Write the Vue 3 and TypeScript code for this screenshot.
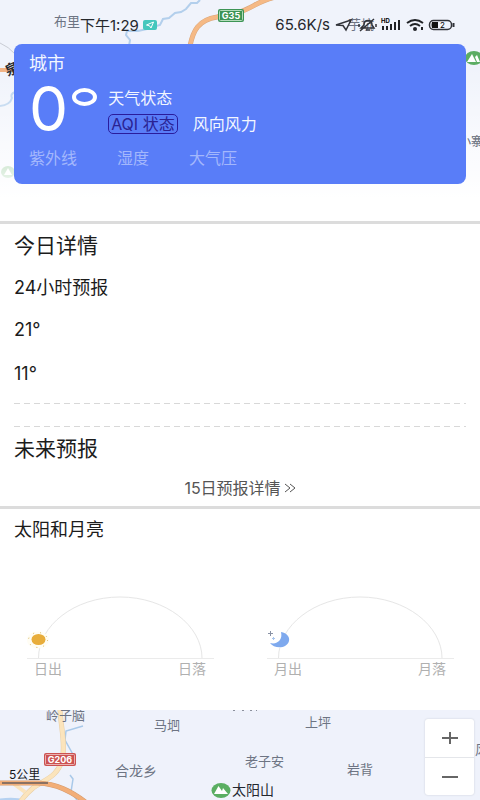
<script setup lang="ts">
import { ref } from 'vue'

interface Orbit {
  id: 'sun' | 'moon'
  rise: string
  set: string
}

const metrics: string[] = ['紫外线', '湿度', '大气压']
const temps: string[] = ['21°', '11°']
const orbits: Orbit[] = [
  { id: 'sun', rise: '日出', set: '日落' },
  { id: 'moon', rise: '月出', set: '月落' },
]

const zoomLevel = ref(12)
</script>

<template>
  <main class="page">
    <section class="hero">
      <svg class="hero-map" viewBox="0 0 480 221" preserveAspectRatio="xMidYMin slice" aria-hidden="true">
        <defs>
          <linearGradient id="fade" x1="0" y1="0" x2="0" y2="1">
            <stop offset="0.3" stop-color="#fff" stop-opacity="0" />
            <stop offset="0.9" stop-color="#fff" stop-opacity="1" />
          </linearGradient>
        </defs>
        <rect width="480" height="221" fill="#f0f3fb" />
        <path d="M200 0 L197 3 L191 3 L186 9 L181 12 L175 13 L169 18 L163 19 L160 25 L153 27 L147 29 L138 31 L127 31 L126 35 L130 40 L129 46" fill="none" stroke="#b3cfec" stroke-width="2" />
        <path d="M190 46 C193 31 198 20 217 17 L240 12 C254 7 260 0 276 -3" fill="none" stroke="#d9a67b" stroke-width="5" />
        <path d="M190 46 C193 31 198 20 217 17 L240 12 C254 7 260 0 276 -3" fill="none" stroke="#f5b985" stroke-width="4" />
        <path d="M0 70 H15" stroke="#f0b182" stroke-width="4" />
        <path d="M0 43 Q9 47 15 54" fill="none" stroke="#c9ccd4" />
        <path d="M0 106 Q10 105 12 98 Q10 94 15 92" fill="none" stroke="#b3cfec" stroke-width="2" />
        <text x="54" y="26" class="place">布里</text>
        <text x="5" y="74" class="place strong" transform="rotate(-25 12 69)">泉</text>
        <text x="348" y="29" class="place">芋坑</text>
        <text x="459" y="146" class="place near">小寨</text>
        <rect x="218" y="9" width="26" height="13" rx="2" fill="#3d9455" />
        <rect x="219.500" y="10.500" width="23" height="10" rx="1" fill="none" stroke="#b4dcbb" />
        <text x="231" y="19" class="shield">G35</text>
        <ellipse cx="474" cy="58" rx="9" ry="7" fill="#5cad63" />
        <path d="M467 62 L472 54 L476 62 Z M475 57 L477 55 L480 62 H477 Z" fill="#fff" />
        <ellipse cx="8" cy="172" rx="7" ry="6" fill="#5cad63" />
        <path d="M4 175 L8 168 L12 175 Z" fill="#fff" />
        <rect width="480" height="221" fill="url(#fade)" />
        <text x="459" y="146" class="place near">小寨</text>
      </svg>

      <header class="status">
        <div class="status-side">
          <span class="clock">下午1:29</span>
          <svg width="14" height="12" viewBox="0 0 14 12" aria-hidden="true">
            <rect y="1" width="14" height="10" rx="2" fill="#45c7bd" />
            <path d="M3.500 6 L10.500 3 L8 9 L6.500 6.800 Z" fill="none" stroke="#fff" />
          </svg>
        </div>
        <div class="status-side">
          <span>65.6K/s</span>
          <svg width="121" height="16" viewBox="0 0 121 16" aria-hidden="true">
            <path d="M2 8 L17 3 L12 13 L9 8.500 Z" fill="none" stroke="#303238" stroke-width="1.500" />
            <path d="M27 11 H40 L38 8 Q38 3.500 34 3.500 Q30 3.500 30 8 Z M32 13 H36 M26 14 L40 2 M25 7 V10 M42 7 V10" fill="none" stroke="#303238" stroke-width="1.500" />
            <text x="47" y="6" class="hd">HD</text>
            <path d="M49 13 V9 M53 13 V9 M57 13 V7 M61 13 V5 M65 13 V3" stroke="#202226" stroke-width="2" />
            <path d="M73 6 Q81 0 89 6 M76 9 Q81 5 86 9" fill="none" stroke="#202226" stroke-width="2" />
            <circle cx="81" cy="12" r="2" fill="#202226" />
            <path d="M88 10 V13" stroke="#202226" stroke-width="2" />
            <rect x="95.500" y="3.500" width="22" height="9" rx="4" fill="none" stroke="#303238" stroke-width="1.500" />
            <path d="M98 5 H104 V11 H98 Q97 8 98 5 Z" fill="#111" />
            <text x="106" y="11" class="charge">2</text>
            <path d="M119.500 6 V10" stroke="#303238" stroke-width="2" />
          </svg>
        </div>
      </header>

      <article class="card">
        <h1 class="city">城市</h1>
        <div class="now">
          <span class="degree">0<i class="ring"></i></span>
          <div class="now-info">
            <span class="line">天气状态</span>
            <div class="line air">
              <span class="aqi">AQI 状态</span>
              <span>风向风力</span>
            </div>
          </div>
        </div>
        <div class="metrics">
          <span v-for="m in metrics" :key="m">{{ m }}</span>
        </div>
      </article>
    </section>

    <section class="block">
      <h2>今日详情</h2>
      <p class="row">24小时预报</p>
      <p v-for="t in temps" :key="t" class="row">{{ t }}</p>
      <svg class="rules" height="24" aria-hidden="true">
        <path d="M0 0.500 H4000 M0 23.500 H4000" />
      </svg>
      <h2>未来预报</h2>
      <a class="more" href="#forecast">15日预报详情
        <svg width="12" height="10" viewBox="0 0 12 10" aria-hidden="true">
          <path d="M1 1 L6 5 L1 9 M6 1 L11 5 L6 9" fill="none" stroke="#555" />
        </svg>
      </a>
    </section>

    <section class="block sky">
      <h2 class="sky-title">太阳和月亮</h2>
      <div class="orbits">
        <div v-for="o in orbits" :key="o.id" class="orbit">
          <svg viewBox="0 0 240 80" aria-hidden="true">
            <path d="M27 78.500 H214" stroke="#ebebeb" />
            <path d="M38.500 78 C38.500 46 74 17 120 17 C166 17 202 46 202 78" fill="none" stroke="#e6e6e6" />
            <g v-if="o.id === 'sun'">
              <ellipse cx="38" cy="60" rx="11" ry="8.500" fill="#fffdf4" />
              <ellipse cx="38" cy="60" rx="9.500" ry="7.500" fill="none" stroke="#d9b559" stroke-dasharray="1 6" />
              <ellipse cx="38.500" cy="59.500" rx="7" ry="5.500" fill="#e8ad3b" />
            </g>
            <g v-else>
              <ellipse cx="38" cy="60" rx="11" ry="8" fill="#fff" />
              <path d="M41 52 C47 53 50 57 49 61 C47 69 34 69 30 63 C37 65 43 60 41 52 Z" fill="#7ea9ee" />
              <path d="M30.500 51 V56 M28 53.500 H33" stroke="#8992a5" />
              <path d="M33.500 57 V60 M32 58.500 H35" stroke="#a8c6ee" />
            </g>
          </svg>
          <div class="ends">
            <span>{{ o.rise }}</span>
            <span>{{ o.set }}</span>
          </div>
        </div>
      </div>
    </section>

    <section class="footer-map">
      <svg viewBox="0 0 480 90" aria-hidden="true">
        <rect width="480" height="90" fill="#eff2fb" />
        <path d="M0 90 Q18 88 25 92 M22 94 Q42 90 52 95" fill="none" stroke="#b5d1f1" stroke-width="3" />
        <path d="M83 16 L66 21 L65 30 L75 48 M70 65 L73 69 L71 82 L77 90" fill="none" stroke="#a9c9e9" stroke-width="1.500" />
        <path d="M60 0 C61 18 66 36 62 50 C58 66 46 69 33 78 C27 83 23 87 19 94" fill="none" stroke="#e8cfa6" stroke-width="5" />
        <path d="M60 0 C61 18 66 36 62 50 C58 66 46 69 33 78 C27 83 23 87 19 94 M14 74 L25 82" fill="none" stroke="#fbe4bc" stroke-width="4" />
        <path d="M0 73 H38 C56 74 70 80 88 94" fill="none" stroke="#d59b6e" stroke-width="5" />
        <path d="M0 73 H38 C56 74 70 80 88 94" fill="none" stroke="#f2ae78" stroke-width="4" />
        <path d="M2 73 H48" stroke="#8b7263" stroke-width="2" />
        <rect x="44" y="43" width="32" height="13" rx="2" fill="#cc5251" />
        <rect x="45.500" y="44.500" width="29" height="10" rx="1" fill="none" stroke="#eab2b1" />
        <text x="60" y="53" class="shield">G206</text>
        <text x="46" y="10" class="place">岭子脑</text>
        <text x="154" y="20" class="place">马垇</text>
        <text x="305" y="17" class="place">上坪</text>
        <text x="245" y="56" class="place">老子安</text>
        <text x="347" y="64" class="place">岩背</text>
        <text x="115" y="66" class="place wide">合龙乡</text>
        <text x="475" y="44" class="place">风</text>
        <text x="9" y="69" class="scale">5公里</text>
        <path d="M233 0.500 H235 M242 0.500 H244 M250 0.500 H252 M256 0.500 H257" stroke="#8b909c" />
        <ellipse cx="221" cy="80.500" rx="9.500" ry="7.500" fill="#5aae62" />
        <path d="M214 84 L218.500 76 L222 81 L223 78 L228 84 Z" fill="#fff" />
        <text x="232" y="85" class="place peak">太阳山</text>
      </svg>
      <div class="zoom">
        <button type="button" aria-label="放大" @click="zoomLevel++">
          <svg width="18" height="14" viewBox="0 0 18 14" aria-hidden="true"><path d="M1 7 H17 M9 1 V13" /></svg>
        </button>
        <button type="button" aria-label="缩小" @click="zoomLevel--">
          <svg width="18" height="14" viewBox="0 0 18 14" aria-hidden="true"><path d="M1 7 H17" /></svg>
        </button>
      </div>
    </section>
  </main>
</template>

<style>
body {
  background: #fff;
}
</style>

<style scoped>
.page {
  font-family: Inter, "Noto Sans CJK SC", sans-serif;
  color: #1c1c1c;
  overflow: hidden;
}
h1,
h2,
p {
  margin: 0;
  font-weight: 400;
}
svg {
  display: block;
  flex-shrink: 0;
}
.hero {
  position: relative;
  padding: 0 14px 37px;
  border-bottom: 3px solid #dcdcdc;
}
.hero-map {
  position: absolute;
  inset: 0;
  width: 100%;
  height: 100%;
}
.place {
  font-size: 13px;
  fill: #6d7483;
}
.near {
  font-size: 12px;
}
.wide {
  font-size: 14px;
}
.strong {
  font-size: 14px;
  font-weight: 700;
  fill: #24262b;
}
.peak {
  font-size: 14px;
  fill: #24282f;
}
.scale {
  font-size: 12px;
  fill: #15171b;
}
.shield {
  font-size: 9px;
  font-weight: 700;
  text-anchor: middle;
  fill: #fff;
}
.hd {
  font-size: 6px;
  font-weight: 700;
}
.charge {
  font-size: 8px;
}
.status {
  position: relative;
  display: flex;
  justify-content: space-between;
  height: 44px;
  padding: 5px 11px 0 66px;
  box-sizing: border-box;
  font-size: 15px;
  color: #26282d;
}
.status-side {
  display: flex;
  align-items: center;
  gap: 4px;
}
.clock {
  font-size: 15px;
}
.card {
  position: relative;
  padding: 8px 15px 14px;
  border-radius: 8px;
  background: #597df8;
  color: #f2f6ff;
}
.city {
  font-size: 18px;
  line-height: 24px;
}
.now {
  display: flex;
  gap: 11px;
  height: 70px;
}
.degree {
  display: flex;
  gap: 4px;
  font-size: 62px;
  line-height: 66px;
  color: #fff;
}
.ring {
  width: 25px;
  height: 18px;
  margin-top: 12px;
  border: 4px solid #fff;
  border-radius: 50%;
  box-sizing: border-box;
}
.now-info {
  display: flex;
  flex-direction: column;
  gap: 6px;
  padding-top: 12px;
}
.line {
  font-size: 16px;
  line-height: 20px;
}
.air {
  display: flex;
  gap: 15px;
}
.aqi {
  padding: 0 2px;
  border: 1px solid #2a1c9c;
  border-radius: 5px;
  line-height: 18px;
  color: #2a2292;
}
.metrics {
  display: flex;
  gap: 40px;
  font-size: 16px;
  line-height: 24px;
  color: #a3b7fc;
}
.block {
  padding: 0 14px;
  border-bottom: 3px solid #dcdcdc;
}
h2 {
  font-size: 21px;
  line-height: 43px;
}
.row {
  font-size: 18px;
  line-height: 44px;
}
.row:first-of-type {
  line-height: 41px;
}
.rules {
  width: 100%;
  margin-top: 7px;
}
.rules path {
  stroke: #d8d8d8;
  stroke-dasharray: 6 4;
}
.more {
  display: flex;
  align-items: center;
  justify-content: center;
  gap: 3px;
  font-size: 16px;
  line-height: 36px;
  color: #555;
  text-decoration: none;
}
.sky {
  padding: 0 0 30px;
  border-bottom: 0;
}
.sky-title {
  padding-left: 14px;
  font-size: 18px;
  line-height: 42px;
}
.orbits {
  display: flex;
  padding-top: 29px;
}
.orbit {
  flex: 1;
}
.orbit svg {
  width: 100%;
}
.ends {
  display: flex;
  justify-content: space-between;
  padding: 0 34px;
  font-size: 14px;
  line-height: 18px;
  color: #b0b0b0;
}
.sky {
  padding-bottom: 32px;
}
.footer-map {
  position: relative;
}
.footer-map > svg {
  width: 100%;
}
.zoom {
  position: absolute;
  top: 9px;
  right: 6px;
  display: flex;
  flex-direction: column;
  width: 49px;
  border-radius: 3px;
  background: #fff;
  box-shadow: 0 0 2px #c6cad4;
}
.zoom button {
  display: grid;
  place-items: center;
  height: 38px;
  padding: 0;
  border: 0;
  background: none;
}
.zoom button + button {
  border-top: 1px solid #e4e6ea;
}
.zoom path {
  stroke: #666;
  stroke-width: 2;
}
</style>
